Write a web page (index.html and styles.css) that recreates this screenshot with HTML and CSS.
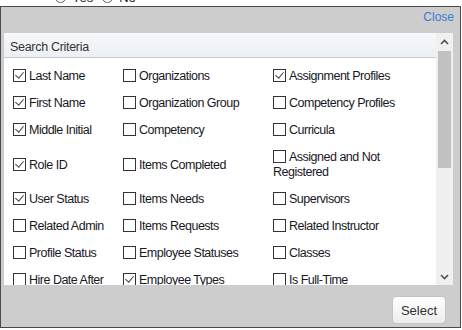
FILE: index.html
```html
<!DOCTYPE html>
<html>
<head>
<meta charset="utf-8">
<link rel="stylesheet" href="styles.css">
</head>
<body>
<div class="above">
  <div class="radios">
    <span class="radio"></span><span class="rlabel">Yes</span>
    <span class="radio"></span><span class="rlabel">No</span>
  </div>
</div>
<div class="dialog">
  <div class="titlebar"><a class="close">Close</a></div>
  <div class="panel">
    <div class="main">
      <div class="phead">Search Criteria</div>
      <div class="content">
        <div class="grid">
          <label class="opt"><span class="cb on"></span>Last Name</label>
          <label class="opt"><span class="cb"></span>Organizations</label>
          <label class="opt"><span class="cb on"></span>Assignment Profiles</label>

          <label class="opt"><span class="cb on"></span>First Name</label>
          <label class="opt"><span class="cb"></span>Organization Group</label>
          <label class="opt"><span class="cb"></span>Competency Profiles</label>

          <label class="opt"><span class="cb on"></span>Middle Initial</label>
          <label class="opt"><span class="cb"></span>Competency</label>
          <label class="opt"><span class="cb"></span>Curricula</label>

          <label class="opt"><span class="cb on"></span>Role ID</label>
          <label class="opt"><span class="cb"></span>Items Completed</label>
          <label class="opt"><span class="cb"></span>Assigned and Not Registered</label>

          <label class="opt"><span class="cb on"></span>User Status</label>
          <label class="opt"><span class="cb"></span>Items Needs</label>
          <label class="opt"><span class="cb"></span>Supervisors</label>

          <label class="opt"><span class="cb"></span>Related Admin</label>
          <label class="opt"><span class="cb"></span>Items Requests</label>
          <label class="opt"><span class="cb"></span>Related Instructor</label>

          <label class="opt"><span class="cb"></span>Profile Status</label>
          <label class="opt"><span class="cb"></span>Employee Statuses</label>
          <label class="opt"><span class="cb"></span>Classes</label>

          <label class="opt"><span class="cb"></span>Hire Date After</label>
          <label class="opt"><span class="cb on"></span>Employee Types</label>
          <label class="opt"><span class="cb"></span>Is Full-Time</label>
        </div>
      </div>
    </div>
    <div class="sbar">
      <div class="sbtn"><svg width="9" height="6" viewBox="0 0 9 6"><polyline points="1,5 4.5,1.5 8,5" fill="none" stroke="#505050" stroke-width="1.6"/></svg></div>
      <div class="track"><div class="thumb"></div></div>
      <div class="sbtn"><svg width="9" height="6" viewBox="0 0 9 6"><polyline points="1,1 4.5,4.5 8,1" fill="none" stroke="#505050" stroke-width="1.6"/></svg></div>
    </div>
  </div>
  <div class="footer"><button class="select">Select</button></div>
</div>
</body>
</html>
```
FILE: styles.css
```css
html, body {
  margin: 0;
  padding: 0;
  background: #ffffff;
  font-family: "Liberation Sans", Arial, sans-serif;
}
.above {
  height: 6px;
  overflow: hidden;
}
.radios {
  display: flex;
  align-items: center;
  margin-top: -10px;
  padding-left: 55px;
  height: 14px;
  font-size: 13px;
  color: #222;
}
.radio {
  width: 11px;
  height: 11px;
  border: 1px solid #666;
  border-radius: 50%;
  box-sizing: border-box;
  margin-right: 6px;
}
.rlabel {
  margin-right: 9px;
}
.dialog {
  width: 461px;
  height: 322px;
  box-sizing: border-box;
  border: 1px solid #4a4a4a;
  background: #cdcdcd;
  display: flex;
  flex-direction: column;
}
.titlebar {
  height: 26px;
  box-sizing: border-box;
  display: flex;
  align-items: center;
  justify-content: flex-end;
  padding: 0 6px 6px 0;
}
.close {
  font-size: 12px;
  color: #3a7bd8;
  cursor: pointer;
}
.panel {
  margin-left: 3px;
  width: 449px;
  height: 252px;
  display: flex;
  background: #fff;
}
.main {
  flex: 1;
  display: flex;
  flex-direction: column;
  min-width: 0;
}
.phead {
  height: 25px;
  box-sizing: border-box;
  border-bottom: 1px solid #c6cbd2;
  background: linear-gradient(#f6f8fb, #eceff4);
  font-size: 12.5px;
  letter-spacing: -0.3px;
  color: #333;
  padding: 4px 0 0 6px;
  display: flex;
  align-items: center;
}
.content {
  flex: 1;
  overflow: hidden;
  padding: 5px 0 0 9px;
}
.grid {
  display: grid;
  grid-template-columns: 110px 150px 150px;
  align-items: center;
}
.opt {
  display: block;
  padding: 6px 0;
  font-size: 12.5px;
  line-height: 15px;
  letter-spacing: -0.5px;
  color: #18181f;
}
.cb {
  display: inline-block;
  width: 13px;
  height: 13px;
  box-sizing: border-box;
  border: 1px solid #333;
  background: #fff;
  vertical-align: -2px;
  margin-right: 3px;
  position: relative;
}
.cb.on::after {
  content: "";
  position: absolute;
  left: 3px;
  top: 0px;
  width: 4px;
  height: 7px;
  border-right: 1.3px solid #444;
  border-bottom: 1.3px solid #444;
  transform: rotate(40deg);
}
.sbar {
  width: 17px;
  background: #f0f0f0;
  display: flex;
  flex-direction: column;
}
.sbtn {
  height: 17px;
  display: flex;
  align-items: center;
  justify-content: center;
}
.track {
  flex: 1;
  padding: 1px 2px 0;
}
.thumb {
  height: 117px;
  background: #c1c1c1;
}
.footer {
  flex: 1;
  display: flex;
  justify-content: flex-end;
  align-items: flex-start;
  padding: 11px 14px 0 0;
}
.select {
  width: 54px;
  height: 28px;
  border: 1px solid #c4c4c4;
  border-radius: 4px;
  background: linear-gradient(#ffffff, #ececec);
  font-family: "Liberation Sans", Arial, sans-serif;
  font-size: 13px;
  color: #333;
  padding: 0;
}
```
